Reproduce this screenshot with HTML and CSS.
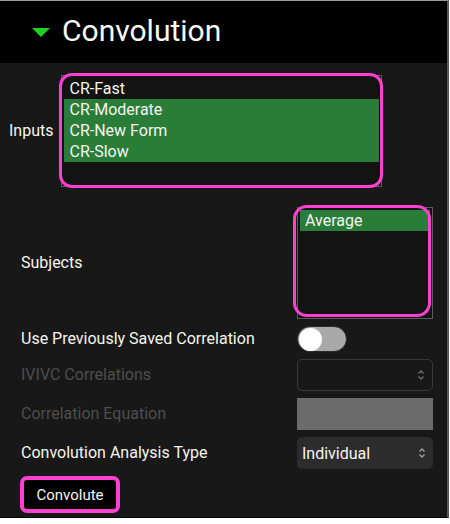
FILE: index.html
```html
<!DOCTYPE html>
<html>
<head>
<meta charset="utf-8">
<link rel="stylesheet" href="styles.css">
</head>
<body>
<div class="frame">
  <header class="header">
    <span class="caret"></span>
    <h1 class="title">Convolution</h1>
  </header>
  <section class="panel">
    <div class="inputs-row">
      <span class="label">Inputs</span>
      <div class="listbox listbox-inputs">
        <div class="item">CR-Fast</div>
        <div class="item selected">CR-Moderate</div>
        <div class="item selected">CR-New Form</div>
        <div class="item selected">CR-Slow</div>
        <span class="mark mark-inputs"></span>
      </div>
    </div>
    <div class="row row-subjects">
      <span class="label">Subjects</span>
      <div class="listbox listbox-subjects">
        <div class="item selected">Average</div>
        <span class="mark mark-subjects"></span>
      </div>
    </div>
    <div class="row">
      <span class="label">Use Previously Saved Correlation</span>
      <div class="toggle"><span class="knob"></span></div>
    </div>
    <div class="row">
      <span class="label disabled">IVIVC Correlations</span>
      <div class="select select-disabled">
        <span class="value"></span>
        <svg class="arrows" width="8" height="12" viewBox="0 0 8 12"><path d="M1.5 4.5 L4 2 L6.5 4.5 M1.5 7.5 L4 10 L6.5 7.5" fill="none" stroke="#6a6a6a" stroke-width="1.5"/></svg>
      </div>
    </div>
    <div class="row">
      <span class="label disabled">Correlation Equation</span>
      <div class="textbox"></div>
    </div>
    <div class="row">
      <span class="label">Convolution Analysis Type</span>
      <div class="select">
        <span class="value">Individual</span>
        <svg class="arrows" width="8" height="12" viewBox="0 0 8 12"><path d="M1.5 4.5 L4 2 L6.5 4.5 M1.5 7.5 L4 10 L6.5 7.5" fill="none" stroke="#9a9a9a" stroke-width="1.5"/></svg>
      </div>
    </div>
    <div class="actions">
      <button class="btn">Convolute</button>
    </div>
  </section>
</div>
</body>
</html>
```
FILE: styles.css
```css
* { box-sizing: border-box; }
html, body { margin: 0; padding: 0; background: #ffffff; }
body { font-family: Roboto, "Noto Sans", sans-serif; }

.frame {
  width: 449px;
  height: 518px;
  border-top: 1px solid #9a9a9a;
  border-right: 2px solid #5a5a5a;
  border-bottom: 1px solid #050505;
  background: #181818;
  display: flex;
  flex-direction: column;
}

.header {
  height: 62px;
  background: #000;
  display: flex;
  align-items: center;
  padding-left: 32px;
  gap: 12px;
  flex: none;
}
.caret {
  width: 0; height: 0;
  border-left: 9px solid transparent;
  border-right: 9px solid transparent;
  border-top: 9px solid #1fd21f;
  margin-top: 1px;
}
.title {
  margin: 0;
  font-weight: 400;
  font-size: 30px;
  color: #fbfbf7;
  line-height: 1;
  margin-top: -2px;
}

.panel {
  flex: 1;
  padding-top: 12px;
  display: flex;
  flex-direction: column;
  gap: 7px;
}

.label {
  font-size: 16px;
  color: #f6f4ee;
  line-height: 20px;
}
.label.disabled { color: #4e4e4e; }

.inputs-row {
  display: flex;
  align-items: center;
  gap: 8px;
  padding-left: 9px;
}

.row {
  display: grid;
  grid-template-columns: 276px 136px;
  align-items: center;
  padding-left: 21px;
}
.row-subjects { margin-top: 13px; }

.listbox {
  position: relative;
  border: 1px solid #5c5c5c;
  background: #131313;
  padding: 2px;
  height: 112px;
}
.listbox-inputs { width: 321px; }
.listbox-subjects { width: 136px; }

.item {
  height: 21px;
  line-height: 21px;
  font-size: 16px;
  color: #f6f4ee;
  padding-left: 5px;
  white-space: nowrap;
}
.item.selected { background: #2a7d39; }

.mark {
  position: absolute;
  border: 3px solid #ff3fd2;
  border-radius: 13px;
  pointer-events: none;
}
.mark-inputs { left: -3px; top: -3px; right: -2px; bottom: -2px; }
.mark-subjects { left: -5px; top: -3px; right: 1px; bottom: 1px; border-radius: 14px; }

.toggle {
  width: 50px;
  height: 26px;
  border-radius: 13px;
  background: #a9a9a9;
  border: 1px solid #2a2a2a;
  padding: 1px;
  display: flex;
  align-items: center;
}
.knob {
  width: 23px;
  height: 23px;
  border-radius: 50%;
  background: #fff;
}

.select {
  height: 32px;
  border-radius: 5px;
  background: #2c2c2c;
  display: flex;
  align-items: center;
  justify-content: space-between;
  padding: 0 7px 0 5px;
}
.select-disabled {
  background: transparent;
  border: 1px solid #393939;
}
.value { font-size: 16px; color: #f6f4ee; }

.textbox {
  height: 32px;
  background: #6b6b6b;
}

.actions {
  padding-left: 20px;
}
.btn {
  font-family: Roboto, "Noto Sans", sans-serif;
  font-size: 15px;
  color: #f6f4ee;
  background: #000;
  border: 4px solid #ff3fd2;
  border-radius: 7px;
  width: 100px;
  height: 37px;
  padding: 0;
}
```
